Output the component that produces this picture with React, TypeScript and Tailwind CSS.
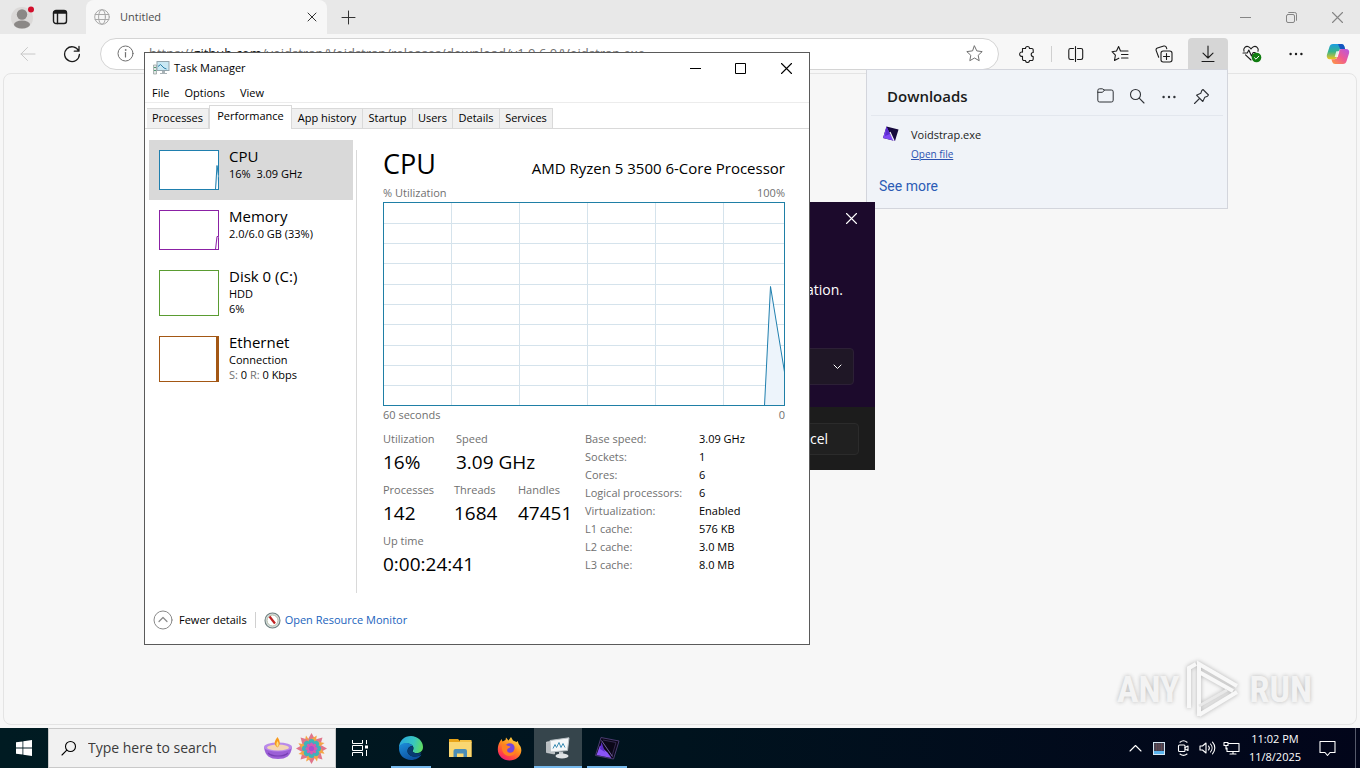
import React from "react";

type IconPropsT = {
  className?: string;
};

type ResourceT = {
  name: string;
  lines: React.ReactNode[];
  color: string;
  height: number;
  shape: React.ReactNode;
};

const strokeProps = {
  fill: "none",
  stroke: "currentColor",
  strokeLinecap: "round" as const,
  strokeLinejoin: "round" as const,
};

/* ---------- icons ---------- */

const ProfileIcon = () => (
  <svg width="26" height="26" viewBox="0 0 26 26">
    <circle cx="12" cy="14" r="11" fill="#dbd9d8" />
    <circle cx="12" cy="10.500" r="5.200" fill="#8b8886" />
    <ellipse cx="12" cy="20.500" rx="8" ry="4" fill="#8b8886" />
    <circle cx="21" cy="5.500" r="3" fill="#d20f2c" />
  </svg>
);

const WorkspaceIcon = () => (
  <svg width="16" height="16" viewBox="0 0 16 16" {...strokeProps} strokeWidth="1.4">
    <rect x="1.500" y="1.500" width="13" height="13" rx="2.500" />
    <path d="M1.500 4h13M2 2.700h12M5.500 4v10.500" />
  </svg>
);

const GlobeIcon = () => (
  <svg width="16" height="16" viewBox="0 0 16 16" {...strokeProps} strokeWidth="1">
    <circle cx="8" cy="8" r="7.300" />
    <ellipse cx="8" cy="8" rx="3.400" ry="7.300" />
    <path d="M1.200 5.500h13.600M1.200 10.500h13.600" />
  </svg>
);

const CloseIcon = ({ className }: IconPropsT) => (
  <svg className={className} width="11" height="11" viewBox="0 0 11 11" {...strokeProps} strokeWidth="1.1">
    <path d="M.500.500l10 10M10.500.500l-10 10" />
  </svg>
);

const TabCloseIcon = () => (
  <svg width="10" height="10" viewBox="0 0 10 10" {...strokeProps} strokeWidth="1">
    <path d="M1 1l8 8M9 1l-8 8" />
  </svg>
);

const MinimizeIcon = () => (
  <svg width="11" height="11" viewBox="0 0 11 11" fill="currentColor">
    <path d="M0 5h11v1H0z" />
  </svg>
);

const PlusIcon = () => (
  <svg width="15" height="15" viewBox="0 0 15 15" {...strokeProps} strokeWidth="1">
    <path d="M7.500 1v13M1 7.500h13" />
  </svg>
);

const RestoreIcon = () => (
  <svg width="11" height="11" viewBox="0 0 11 11" {...strokeProps} strokeWidth="1">
    <rect x="0.500" y="2.500" width="8" height="8" rx="1.500" />
    <path d="M2.700.500h6a1.800 1.800 0 0 1 1.800 1.800v6" />
  </svg>
);

const BackIcon = () => (
  <svg width="16" height="16" viewBox="0 0 16 16" {...strokeProps} strokeWidth="1">
    <path d="M15 8H1M7.500 1.500L1 8l6.500 6.500" />
  </svg>
);

const ReloadIcon = () => (
  <svg width="18" height="18" viewBox="0 0 18 18" {...strokeProps} strokeWidth="1.3">
    <path d="M15.700 6A7.400 7.400 0 1 0 16.400 9.500M16 1.500V6.200h-4.700" />
  </svg>
);

const InfoIcon = () => (
  <svg width="17" height="17" viewBox="0 0 17 17" {...strokeProps} strokeWidth="1">
    <circle cx="8.500" cy="8.500" r="7.500" />
    <path d="M8.500 7.500v4.500" strokeWidth="1.2" />
    <circle cx="8.500" cy="5" r=".4" />
  </svg>
);

const StarIcon = () => (
  <svg width="17" height="17" viewBox="0 0 17 17" {...strokeProps} strokeWidth="1">
    <path d="M8.500 1l2.300 4.900 5.400.7-4 3.700 1 5.400-4.700-2.700-4.700 2.700 1-5.400-4-3.700 5.400-.7z" />
  </svg>
);

const PuzzleIcon = () => (
  <svg width="16" height="18" viewBox="0 0 16 18" {...strokeProps} strokeWidth="1.1">
    <path d="M3.500 3.500h3a2 2 0 1 1 4 0h2.300a1.400 1.400 0 0 1 1.400 1.400v2.600a2 2 0 1 0 0 4v2.600a1.400 1.400 0 0 1-1.400 1.400h-2.300a2 2 0 0 1-4 0H4.900a1.400 1.400 0 0 1-1.400-1.400v-2.800a2.200 2.200 0 1 1 0-4.200z" />
  </svg>
);

const SplitIcon = () => (
  <svg width="16" height="16" viewBox="0 0 16 16" {...strokeProps} strokeWidth="1.1">
    <path d="M5.500 2.500H2.500A1.700 1.700 0 0 0 .800 4.200v7.600A1.700 1.700 0 0 0 2.500 13.500h3M9.500 2.500h3.500a1.700 1.700 0 0 1 1.700 1.700v7.600a1.700 1.700 0 0 1-1.700 1.700H9.500M7.500.600v14.800" />
  </svg>
);

const FavoritesIcon = () => (
  <svg width="18" height="17" viewBox="0 0 18 17" {...strokeProps} strokeWidth="1.1">
    <path d="M9.500 6L7.600 1.500 5.500 6 1 6.700l3.400 3.500-.9 5.300 4.300-2.300M9.500 6H17M10.500 9.500H17M10.500 13H17" />
  </svg>
);

const CollectionsIcon = () => (
  <svg width="18" height="18" viewBox="0 0 18 18" {...strokeProps} strokeWidth="1.1">
    <rect x="6" y="6" width="11" height="11" rx="2.200" />
    <path d="M11.500 8.500v6M8.500 11.500h6M3.700 12.300L1.200 5.600a2 2 0 0 1 1.200-2.500l6.400-2a2 2 0 0 1 2.500 1.200l.5 1.500" />
  </svg>
);

const DownloadIcon = () => (
  <svg width="14" height="18" viewBox="0 0 14 18" {...strokeProps} strokeWidth="1.1">
    <path d="M7 1v12M2 8.200L7 13l5-4.800M1 16.500h12" />
  </svg>
);

const HealthIcon = () => (
  <svg width="20" height="18" viewBox="0 0 20 18" {...strokeProps} strokeWidth="1.1">
    <path d="M2 6.200C.800 3 4 .700 6.500 1.700 7.700 2.200 8.500 3.200 9 4c.5-.8 1.300-1.800 2.500-2.300C14 .700 17.200 3 16 6.200M1 8h4.300l1.500-3 2.700 6 1.700-3.500h2M3.500 9.800L9 15" />
    <circle cx="14.500" cy="12.500" r="4.800" fill="#107c10" stroke="none" />
    <path d="M12.500 12.700l1.500 1.500 2.800-3" stroke="#fff" strokeWidth="1" />
  </svg>
);

const DotsIcon = () => (
  <svg width="14" height="4" viewBox="0 0 14 4" fill="currentColor">
    <circle cx="1.600" cy="2" r="1.200" />
    <circle cx="7" cy="2" r="1.200" />
    <circle cx="12.400" cy="2" r="1.200" />
  </svg>
);

const CopilotIcon = () => (
  <svg width="24" height="22" viewBox="0 0 24 22">
    <defs>
      <linearGradient id="cpA" x1="0" y1="0" x2="0" y2="1">
        <stop offset="0" stopColor="#1b9de2" />
        <stop offset="0.5" stopColor="#38b48a" />
        <stop offset="1" stopColor="#f5c51c" />
      </linearGradient>
      <linearGradient id="cpB" x1="1" y1="0" x2="0" y2="1">
        <stop offset="0" stopColor="#b457e6" />
        <stop offset="0.5" stopColor="#ef5a92" />
        <stop offset="1" stopColor="#ff9b3d" />
      </linearGradient>
    </defs>
    <path d="M7 1h8.500a3 3 0 0 1 2.700 2l.9 3h-3.600a3 3 0 0 0-2.900 2.200l-1.700 6A3 3 0 0 1 8 16.300H4.200C1.300 16.300.300 14 1 11.500L3.400 4C4 2 5 1 7 1z" fill="url(#cpA)" />
    <path d="M12 1h3.500a3 3 0 0 1 2.700 2l.9 3h-3.600l-1.200.3z" fill="#1555c0" />
    <path d="M17 21H9a3 3 0 0 1-2.700-2l-.9-2.700h3a3 3 0 0 0 2.900-2.200l1.700-6A3 3 0 0 1 16 6h3.800c2.900 0 3.900 2 3.200 4.500L20.600 18c-.6 2-1.600 3-3.600 3z" fill="url(#cpB)" />
    <path d="M10.300 8.300h3.200l-1.700 5.600H8.700z" fill="#fff" opacity="0.800" />
  </svg>
);

const FolderIcon = () => (
  <svg width="17" height="15" viewBox="0 0 17 15" {...strokeProps} strokeWidth="1">
    <path d="M.800 4.300h4.700L7.500 2h6.800a1.800 1.800 0 0 1 1.900 1.900v8.200a1.800 1.800 0 0 1-1.900 1.900H2.700a1.800 1.800 0 0 1-1.900-1.900V2.700A1.800 1.800 0 0 1 2.700.800h2.600L7.500 2" />
  </svg>
);

const SearchIcon = ({ className }: IconPropsT) => (
  <svg className={className} width="16" height="16" viewBox="0 0 16 16" {...strokeProps} strokeWidth="1.1">
    <circle cx="6.500" cy="6.500" r="5" />
    <path d="M10.200 10.200l4.800 4.800" />
  </svg>
);

const PinIcon = () => (
  <svg width="17" height="17" viewBox="0 0 17 17" {...strokeProps} strokeWidth="1.1">
    <path d="M10 1.500l5.500 5.500-1 1.200-2.700 1-2 4.300L3.500 7.200l4.300-2 1-2.700zM6.500 10.500L1.500 15.500" />
  </svg>
);

const VoidstrapIcon = () => (
  <svg width="17" height="16" viewBox="0 0 17 16">
    <path d="M4.500.500L16.500 3.500 13 15 1 12z" fill="#160a3c" />
    <path d="M4.500.500L1 12l12 3L8 8z" fill="#8048f5" />
    <path d="M4.500.500L3 10l5-2z" fill="#5b2bd0" />
    <path d="M8 6l4 8.700" stroke="#f0f0f8" strokeWidth="1.2" />
  </svg>
);

const VoidstrapTaskIcon = () => (
  <svg width="26" height="24" viewBox="0 0 26 24" fill="none">
    <path d="M7 1.500L25 5 19.500 23 1.500 19.500z" fill="#0b0718" stroke="#4a3b70" />
    <path d="M9 4l13 2.500-4 13.500" stroke="#33284f" />
    <path d="M6 9.500L2.500 19l15 3-4-5.500z" fill="#8a55f7" />
    <path d="M7.500 6L6 13l5 3z" fill="#5a2cc4" />
    <path d="M7.500 4.500l11 16" stroke="#9d86d8" strokeWidth="0.7" />
  </svg>
);

const TaskManagerIcon = () => (
  <svg width="17" height="16" viewBox="0 0 17 16">
    <path d="M.500 5h3v9h-3z" fill="#e3e6e6" stroke="#8d9a96" strokeWidth="0.7" />
    <path d="M1 7h2v1H1zM1 10h2v1H1z" fill="#4e9a72" />
    <rect x="4" y="1.500" width="12" height="9" fill="#c8e8f4" stroke="#93a5ad" />
    <path d="M5 6.500l2.500-2L11 8l2.500 1" fill="none" stroke="#2b7fa8" />
    <path d="M9 11h3v2H9zM7 13h7v1H7z" fill="#aab3b7" />
  </svg>
);

const TaskManagerTaskIcon = () => (
  <svg width="26" height="24" viewBox="0 0 26 24">
    <path d="M1.500 6l8-1v13l-8-1.500z" fill="#b9bec1" stroke="#e4e6e7" strokeWidth="0.600" />
    <path d="M5 4.500L24 1.800 22.500 14.500 5.500 16z" fill="#f5f7f8" stroke="#b9c1c5" />
    <path d="M8 12.500l2-4 1.500 3L14 6.500l2 5 2-4 2 4" fill="none" stroke="#3f8fb5" />
    <path d="M14 16l4-.3.5 3h-4.500z" fill="#c6ccd0" />
    <ellipse cx="17" cy="20" rx="6.500" ry="2.500" fill="#dfe3e5" />
  </svg>
);

const ResourceMonitorIcon = () => (
  <svg width="17" height="17" viewBox="0 0 17 17">
    <circle cx="8.500" cy="8.500" r="7.500" fill="#d8e3e3" stroke="#6f7f7f" strokeWidth="1.100" />
    <circle cx="8.500" cy="8.500" r="5.500" fill="#fff" stroke="#a9b09a" strokeWidth="0.900" />
    <path d="M5.500 4.500l5.500 7" stroke="#c02020" strokeWidth="2.200" />
  </svg>
);

const ChevronUpCircle = () => (
  <svg width="20" height="20" viewBox="0 0 20 20" {...strokeProps} strokeWidth="1">
    <circle cx="10" cy="10" r="9" />
    <path d="M6 11.500l4-4 4 4" strokeWidth="1.200" />
  </svg>
);

const WindowsIcon = () => (
  <svg width="16" height="16" viewBox="0 0 16 16" fill="#fff">
    <path d="M0 2.300L6.500 1.400v6.200H0zM7.300 1.300L16 0v7.600H7.300zM0 8.400h6.500v6.200L0 13.700zM7.300 8.400H16V16l-8.700-1.300z" />
  </svg>
);

const DiyaIcon = () => (
  <svg width="28" height="24" viewBox="0 0 28 24">
    <path d="M0 11c1 9 6 12 14 12s13-3 14-12z" fill="#9b5fd6" />
    <ellipse cx="14" cy="11" rx="14" ry="4.500" fill="#b98aea" />
    <ellipse cx="14" cy="11.500" rx="11" ry="3" fill="#f3d6b4" />
    <path d="M13.500 1c-3 4-4.500 7 0 10.500C17 8 16 5 13.500 1z" fill="#f79a1c" />
    <path d="M13.600 5c-1.300 2-2 4 0 6 1.600-2 1.200-4 0-6z" fill="#ffe07a" />
    <path d="M4 17c4 4 16 4 20 0" fill="none" stroke="#7840b5" strokeWidth="1.200" />
  </svg>
);

const petals = [0, 45, 90, 135, 180, 225, 270, 315];

const RangoliIcon = () => (
  <svg width="31" height="31" viewBox="-15.500 -15.500 31 31">
    {petals.map((angle) => (
      <g key={angle} transform={`rotate(${angle})`}>
        <path d="M0-15.500l4.500 8H-4.500z" fill="#e0758a" />
        <path d="M-5.500-13l3.500 5-5 2z" fill="#f4a545" />
      </g>
    ))}
    <circle r="9" fill="#f0a04a" />
    {petals.map((angle) => (
      <circle key={angle} transform={`rotate(${angle})`} cy="-6.500" r="3" fill="#3fb3b8" />
    ))}
    <circle r="6" fill="#4b9fce" />
    {petals.map((angle) => (
      <ellipse key={angle} transform={`rotate(${angle})`} cy="-3.500" rx="1.600" ry="2.600" fill="#d85ab0" />
    ))}
    <circle r="2.600" fill="#a64fd0" />
  </svg>
);

const TaskViewIcon = () => (
  <svg width="17" height="16" viewBox="0 0 17 16" fill="none" stroke="#fff">
    <path d="M.500 0v3.500h10V0M.500 16v-3.500h10V16M.500 5.500h10v5H.500zM14.500 0v4M14.500 10v6" />
    <path d="M13 5.500h3v3h-3z" fill="#fff" stroke="none" />
  </svg>
);

const EdgeIcon = () => (
  <svg width="26" height="26" viewBox="0 0 26 26">
    <defs>
      <linearGradient id="edgeTop" x1="0" y1="0.300" x2="1" y2="0.500">
        <stop offset="0" stopColor="#28a7df" />
        <stop offset="0.600" stopColor="#38c6c0" />
        <stop offset="1" stopColor="#5fdc62" />
      </linearGradient>
      <linearGradient id="edgeLow" x1="0" y1="0" x2="0.600" y2="1">
        <stop offset="0" stopColor="#1d8fdb" />
        <stop offset="1" stopColor="#0c4f9e" />
      </linearGradient>
    </defs>
    <path d="M1 13C1 5.500 6.500 1 13 1s12 5 12 11c0 4-3 6-6.500 6-2 0-4-.8-4-1.800 0-.7 1-1.200 1-3 0-2.500-2.500-4.700-6.500-4.700S2 10 1 13z" fill="url(#edgeTop)" />
    <path d="M1 13.500C1 10 4.500 8 8.500 8c3 0 5.500 1.500 6.500 3.500-2.500-1-5.500 1-5.500 4.500 0 3.500 3.500 5.500 7.500 5.500 3 0 5-1 6.500-2-1.800 3.300-6 5.500-10.300 5.500C6 25 1 20 1 13.500z" fill="url(#edgeLow)" />
    <path d="M9.500 16c0-2.500 2-4.500 4-4.500.8 0 1.400.3 1.800.7 0 2-.9 2.800-.9 3.700 0 1.200 2 2.300 4.500 2.300 1.700 0 3.400-.4 4.600-1.300-.3 1.200-1 2.500-1.800 3.500-1.500.7-3 1.100-4.700 1.100-4 0-7.500-2-7.500-5.500z" fill="#083b72" />
  </svg>
);

const ExplorerIcon = () => (
  <svg width="23" height="20" viewBox="0 0 23 20">
    <path d="M0 1h9l2 2h11.500v16H0z" fill="#e8a317" />
    <path d="M11 2h11.500v3H11z" fill="#f4c145" />
    <path d="M0 4h22.500v15H0z" fill="#fad772" />
    <path d="M4.500 19v-6a2 2 0 0 1 2-2h9.500a2 2 0 0 1 2 2v6h-3.500v-3.500h-6.500V19z" fill="#4a8db8" />
  </svg>
);

const FirefoxIcon = () => (
  <svg width="25" height="25" viewBox="0 0 25 25">
    <defs>
      <linearGradient id="ffFlame" x1="0.800" y1="0" x2="0.200" y2="1">
        <stop offset="0" stopColor="#ffe14a" />
        <stop offset="0.450" stopColor="#ff8b1c" />
        <stop offset="0.800" stopColor="#ff3a4c" />
        <stop offset="1" stopColor="#e31a86" />
      </linearGradient>
    </defs>
    <path d="M3 5.500L4.500 3l1 2.500L8.500 4l.5-2.500 2.500 3L14 1l2 3.500L19.500 6l1.200-1 1 3C23.500 10 24.500 12 24.300 15c-.5 5.500-5.500 9.500-11.800 9.500S.800 20 .800 13.500C.800 10.500 1.500 7.500 3 5.500z" fill="url(#ffFlame)" />
    <circle cx="12.800" cy="12" r="4.800" fill="#7546dd" />
    <path d="M5 9c2-1 4-.5 5.500.8 1.500.4 2.500.4 3 .7-.5 1.700-2.500 1.500-3.300 3-.5 2 1 3.500 3 3.500 3 0 5-1.500 6-5 .5 5-2.500 8-7 8-5 0-8-4.500-7.200-11z" fill="#ff8022" />
  </svg>
);

const trayProps = { ...strokeProps, stroke: "#fff", strokeWidth: 1.1 };

const TrayChevron = () => (
  <svg width="13" height="8" viewBox="0 0 13 8" {...trayProps}>
    <path d="M1 7l5.500-5.500L12 7" />
  </svg>
);

const TrayAppIcon = () => (
  <svg width="12" height="13" viewBox="0 0 12 13">
    <path d="M0 0h12v13H0z" fill="#d6e6f2" />
    <path d="M1 1h10v8H1z" fill="#3a3f52" />
    <path d="M1 3h10M1 5h10M1 7h10M3.500 1v8M6 1v8M8.500 1v8" stroke="#8e5550" strokeWidth="0.400" />
    <path d="M1 9h10v3H1z" fill="#5bb5ee" />
  </svg>
);

const TrayCamera = () => (
  <svg width="13" height="16" viewBox="0 0 13 16" {...trayProps}>
    <rect x="1.500" y="5" width="6.500" height="6.500" rx="1" />
    <path d="M8 7.500l3-1.500v4.500L8 9M3 2.200C5 .600 8 .600 10 2.200M3 14c2 1.500 5 1.500 7 0" />
  </svg>
);

const TrayVolume = () => (
  <svg width="17" height="14" viewBox="0 0 17 14" {...trayProps}>
    <path d="M1 5v4h2.500L7 12V2L3.500 5zM9.500 5a3 3 0 0 1 0 4M11.500 3a6 6 0 0 1 0 8M13.500 1.200a8.500 8.500 0 0 1 0 11.600" />
  </svg>
);

const TrayNetwork = () => (
  <svg width="17" height="14" viewBox="0 0 17 14" {...trayProps}>
    <path d="M6 2.500h10v8H4V7M10 10.500V13M7 13h6M1 1.500h4v3H1zM3 4.500V8" />
  </svg>
);

const TrayNotification = () => (
  <svg width="17" height="17" viewBox="0 0 17 17" {...trayProps}>
    <path d="M1 1.500h15v11h-5l-2.500 3-2.500-3H1z" />
  </svg>
);

/* ---------- browser ---------- */

const toolbarButton = "flex h-[30px] w-11 items-center justify-center";

const TabStrip = () => (
  <div className="flex h-[34px] bg-[#e8e8e8] text-[#1b1b1b]">
    <div className="flex w-[86px] items-center rounded-br-lg pl-[10px]">
      <button type="button" aria-label="Profile">
        <ProfileIcon />
      </button>
      <button type="button" aria-label="Tab actions" className="ml-4">
        <WorkspaceIcon />
      </button>
    </div>
    <div className="flex w-[241px] items-center rounded-t-lg bg-[#f7f7f7] pr-[10px] pl-2">
      <span className="text-[#a9a9a9]">
        <GlobeIcon />
      </span>
      <span className="ml-[10px] flex-1 text-[11px] text-[#4d4d4d]">Untitled</span>
      <button type="button" aria-label="Close tab" className="text-[#333]">
        <TabCloseIcon />
      </button>
    </div>
    <button type="button" aria-label="New tab" className="ml-[14px] text-[#333]">
      <PlusIcon />
    </button>
    <div className="ml-auto flex text-[#858585]">
      <button type="button" aria-label="Minimize" className="flex w-[46px] items-center justify-center">
        <MinimizeIcon />
      </button>
      <button type="button" aria-label="Restore" className="flex w-[46px] items-center justify-center">
        <RestoreIcon />
      </button>
      <button type="button" aria-label="Close" className="flex w-[46px] items-center justify-center">
        <CloseIcon />
      </button>
    </div>
  </div>
);

const Toolbar = () => (
  <div className="flex h-[39px] items-center pr-[2px] text-[#1b1b1b]">
    <button type="button" aria-label="Back" className="ml-5 text-[#c8c8c8]">
      <BackIcon />
    </button>
    <button type="button" aria-label="Refresh" className="ml-[27px]">
      <ReloadIcon />
    </button>
    <div className="mr-[6px] ml-[19px] flex h-8 flex-1 items-center rounded-full border border-[#d4d4d4] bg-white pr-[15px] pl-4">
      <span className="text-[#707070]">
        <InfoIcon />
      </span>
      <span className="ml-[15px] flex-1 text-[13px] whitespace-nowrap text-[#707070]">
        https://<span className="text-[#1b1b1b]">github.com</span>
        /voidstrap/Voidstrap/releases/download/v1.0.6.0/Voidstrap.exe
      </span>
      <button type="button" aria-label="Add to favorites" className="text-[#707070]">
        <StarIcon />
      </button>
    </div>
    <button type="button" aria-label="Extensions" className={toolbarButton}>
      <PuzzleIcon />
    </button>
    <span className="mx-[2px] h-4 w-px bg-[#d0d0d0]" />
    <button type="button" aria-label="Split screen" className={toolbarButton}>
      <SplitIcon />
    </button>
    <button type="button" aria-label="Favorites" className={toolbarButton}>
      <FavoritesIcon />
    </button>
    <button type="button" aria-label="Collections" className={toolbarButton}>
      <CollectionsIcon />
    </button>
    <button
      type="button"
      aria-label="Downloads"
      className="mx-[2px] flex h-[31px] w-10 items-center justify-center rounded-t bg-[#d6d6d6]"
    >
      <DownloadIcon />
    </button>
    <button type="button" aria-label="Browser essentials" className={toolbarButton}>
      <HealthIcon />
    </button>
    <button type="button" aria-label="Settings and more" className={toolbarButton}>
      <DotsIcon />
    </button>
    <button type="button" aria-label="Copilot" className="flex w-10 items-center justify-center">
      <CopilotIcon />
    </button>
  </div>
);

const DownloadsPanel = () => (
  <section className="absolute top-[69px] right-[132px] w-[362px] border border-[#d3d5dc] bg-[#f0f3f8] px-1 pb-3 text-[#1b1b1b]">
    <div className="flex h-[46px] items-center border-b border-[#e3e7ee] pt-2 pr-[6px] pl-4">
      <h2 className="flex-1 text-[15px] font-semibold">Downloads</h2>
      <div className="flex text-[#2f3237]">
        <button type="button" aria-label="Open downloads folder" className="flex w-8 justify-center">
          <FolderIcon />
        </button>
        <button type="button" aria-label="Search downloads" className="flex w-8 justify-center">
          <SearchIcon />
        </button>
        <button type="button" aria-label="More options" className="flex w-8 items-center justify-center">
          <DotsIcon />
        </button>
        <button type="button" aria-label="Pin downloads" className="flex w-8 justify-center">
          <PinIcon />
        </button>
      </div>
    </div>
    <div className="flex pt-[10px] pl-[11px]">
      <VoidstrapIcon />
      <div className="ml-3">
        <p className="text-[11px] leading-[18px]">Voidstrap.exe</p>
        <a href="#open" className="block text-[10px] leading-5 text-[#2c52b0] underline">
          Open file
        </a>
      </div>
    </div>
    <a
      href="#all"
      className="mt-3 ml-2 block font-[Roboto,sans-serif] text-sm leading-5 text-[#2c5bb5]"
    >
      See more
    </a>
  </section>
);

/* ---------- installer dialog ---------- */

const InstallerDialog = () => (
  <section className="absolute top-[202px] left-[455px] w-[420px] bg-[#1c0a2c] text-sm text-white">
    <div className="flex h-8 justify-end">
      <button type="button" aria-label="Close installer" className="flex w-12 items-center justify-center">
        <CloseIcon />
      </button>
    </div>
    <p className="mt-[46px] mr-8 text-right leading-5">installation.</p>
    <div className="mx-[21px] mt-12 flex h-[37px] items-center justify-end rounded border border-[#2c2036] bg-[#1f1726] pr-[11px]">
      <svg width="9" height="6" viewBox="0 0 9 6" {...strokeProps}>
        <path d="M1 1l3.500 3.500L8 1" />
      </svg>
    </div>
    <div className="mt-[22px] flex h-[63px] items-center justify-end bg-[#1c1c1c] pr-4">
      <button type="button" className="h-8 w-[105px] rounded border border-[#2b2b2b] bg-[#202020]">
        Cancel
      </button>
    </div>
  </section>
);

/* ---------- task manager ---------- */

const tabs = [
  { label: "Processes", width: "w-[62px]" },
  { label: "Performance", width: "w-[83px]" },
  { label: "App history", width: "w-[71px]" },
  { label: "Startup", width: "w-[50px]" },
  { label: "Users", width: "w-[40px]" },
  { label: "Details", width: "w-[47px]" },
  { label: "Services", width: "w-[53px]" },
];

const resources: ResourceT[] = [
  {
    name: "CPU",
    lines: ["16%  3.09 GHz"],
    color: "#1f7fae",
    height: 40,
    shape: <path d="M56.500 39.500l1.500-24 1.500 10" fill="#d9eaf4" stroke="#1f7fae" />,
  },
  {
    name: "Memory",
    lines: ["2.0/6.0 GB (33%)"],
    color: "#8b21a5",
    height: 40,
    shape: <path d="M56.500 39.500l1.500-13h1.500" fill="#f4e6f8" stroke="#8b21a5" />,
  },
  { name: "Disk 0 (C:)", lines: ["HDD", "6%"], color: "#5a9c32", height: 46, shape: null },
  {
    name: "Ethernet",
    lines: [
      "Connection",
      <>
        <span className="text-[#707070]">S:</span> 0 <span className="text-[#707070]">R:</span> 0 Kbps
      </>,
    ],
    color: "#a35714",
    height: 46,
    shape: <path d="M57 1h3v44h-3z" fill="#a35714" />,
  },
];

const stats = [
  [
    { label: "Utilization", value: "16%", width: "w-[73px]" },
    { label: "Speed", value: "3.09 GHz", width: "w-[120px]" },
  ],
  [
    { label: "Processes", value: "142", width: "w-[71px]" },
    { label: "Threads", value: "1684", width: "w-16" },
    { label: "Handles", value: "47451", width: "w-16" },
  ],
  [{ label: "Up time", value: "0:00:24:41", width: "w-[120px]" }],
];

const specs = [
  ["Base speed:", "3.09 GHz"],
  ["Sockets:", "1"],
  ["Cores:", "6"],
  ["Logical processors:", "6"],
  ["Virtualization:", "Enabled"],
  ["L1 cache:", "576 KB"],
  ["L2 cache:", "3.0 MB"],
  ["L3 cache:", "8.0 MB"],
];

const UtilizationChart = () => (
  <svg className="block" width="402" height="204" viewBox="0 0 402 204" fill="none">
    {[68, 136, 204, 272, 340].map((x) => (
      <path key={x} d={`M${x}.5 0v204`} stroke="#d5e3ec" />
    ))}
    {[21, 41, 61, 82, 102, 122, 143, 163, 183].map((y) => (
      <path key={y} d={`M0 ${y}.5h402`} stroke="#d5e3ec" />
    ))}
    <path d="M381.500 203.500L387.500 84.500 401.500 170V203.500z" fill="#edf4fb" />
    <path d="M381.500 203.500L387.500 84.500 401.500 170" stroke="#1f7fae" />
    <rect x="0.500" y="0.500" width="401" height="203" stroke="#1f7fa6" />
  </svg>
);

const ResourceList = () => (
  <div className="w-[208px] border-r border-[#d9d9d9] pr-[3px]">
    {resources.map((item, index) => (
      <button
        type="button"
        key={item.name}
        className={
          index === 0
            ? "-mt-[10px] flex w-full bg-[#d9d9d9] px-[10px] py-[10px] text-left"
            : "flex w-full px-[10px] py-[10px] text-left"
        }
      >
        <svg width="60" height={item.height} viewBox={`0 0 60 ${item.height}`} className="shrink-0">
          <rect x="0.500" y="0.500" width="59" height={item.height - 1} fill="#fff" stroke={item.color} />
          {item.shape}
        </svg>
        <div className="-mt-1 ml-[10px] h-0">
          <p className="text-[15px] leading-5">{item.name}</p>
          {item.lines.map((line, i) => (
            <p key={i} className="text-[11px] leading-[15px] whitespace-pre">
              {line}
            </p>
          ))}
        </div>
      </button>
    ))}
  </div>
);

const PerformancePane = () => (
  <div className="ml-[26px] w-[402px] text-[#707070]">
    <div className="flex items-baseline justify-between text-black">
      <h1 className="text-[27px] leading-7">CPU</h1>
      <span className="text-[15px]">AMD Ryzen 5 3500 6-Core Processor</span>
    </div>
    <div className="mt-1 flex justify-between text-[11px] leading-[18px]">
      <span>% Utilization</span>
      <span>100%</span>
    </div>
    <UtilizationChart />
    <div className="flex justify-between text-[11px] leading-[18px]">
      <span>60 seconds</span>
      <span>0</span>
    </div>
    <div className="mt-[6px] flex items-start">
      <div className="w-[202px]">
        {stats.map((row, i) => (
          <div key={i} className="flex h-[51px]">
            {row.map((stat) => (
              <div key={stat.label} className={`${stat.width} shrink-0`}>
                <p className="text-[11px] leading-[18px]">{stat.label}</p>
                <p className="text-[19px] leading-7 whitespace-nowrap text-black">{stat.value}</p>
              </div>
            ))}
          </div>
        ))}
      </div>
      <table className="text-[11px]">
        <tbody>
          {specs.map(([label, value]) => (
            <tr key={label} className="h-[18px] leading-[18px]">
              <th scope="row" className="w-[114px] p-0 text-left font-normal">
                {label}
              </th>
              <td className="p-0 text-black">{value}</td>
            </tr>
          ))}
        </tbody>
      </table>
    </div>
  </div>
);

const TaskManager = () => (
  <section className="absolute top-[52px] left-36 w-[666px] border border-[#5a5a5a] bg-white text-[11px] text-black">
    <div className="flex h-[30px] items-center pl-2">
      <TaskManagerIcon />
      <span className="ml-1 flex-1">Task Manager</span>
      <button type="button" aria-label="Minimize Task Manager" className="flex w-[46px] justify-center">
        <MinimizeIcon />
      </button>
      <button type="button" aria-label="Maximize Task Manager" className="flex w-[45px] justify-center">
        <svg width="11" height="11" viewBox="0 0 11 11" fill="none" stroke="#000">
          <path d="M.500.500h10v10H.500z" />
        </svg>
      </button>
      <button type="button" aria-label="Close Task Manager" className="flex w-[46px] justify-center">
        <CloseIcon />
      </button>
    </div>
    <div className="flex h-5 items-center gap-[15px] border-b border-[#ececec] pt-[2px] pl-[7px]">
      <button type="button">File</button>
      <button type="button">Options</button>
      <button type="button">View</button>
    </div>
    <div role="tablist" className="flex h-[26px] items-end border-b border-[#d9d9d9] pl-[2px]">
      {tabs.map((tab) => {
        const selected = tab.label === "Performance";
        return (
          <button
            type="button"
            role="tab"
            key={tab.label}
            aria-selected={selected}
            className={`${tab.width} ${
              selected
                ? "-mb-px h-6 border-x border-t border-[#d9d9d9] bg-white pb-[3px]"
                : "h-5 border-t border-r border-[#d9d9d9] bg-[#f0f0f0]"
            } flex items-center justify-center whitespace-nowrap`}
          >
            {tab.label}
          </button>
        );
      })}
    </div>
    <div className="flex pt-[21px] pl-1">
      <div className="flex h-[443px]">
        <ResourceList />
      </div>
      <PerformancePane />
    </div>
    <div className="flex items-center pt-[17px] pb-[14px] pl-2">
      <button type="button" className="flex items-center gap-[6px]">
        <span className="text-[#8a8a8a]">
          <ChevronUpCircle />
        </span>
        Fewer details
      </button>
      <span className="mx-2 h-4 w-px bg-[#d0d0d0]" />
      <ResourceMonitorIcon />
      <a href="#monitor" className="ml-1 text-[#1a63bd]">
        Open Resource Monitor
      </a>
    </div>
  </section>
);

const Watermark = () => (
  <div className="absolute right-12 bottom-[46px] flex items-center gap-[6px] font-['Liberation_Sans_Narrow','Roboto_Condensed',sans-serif] text-[36px] leading-none font-bold text-[#f3f3f3] [text-shadow:0_0_4px_#b8b8b8]">
    <span>ANY</span>
    <svg width="58" height="64" viewBox="0 0 58 64" fill="none" className="drop-shadow-[0_0_2px_#b0b0b0]">
      <path d="M4 50V10l7-4M14 58V6l38 22M14 14v0l34 19M52 34L14 57" stroke="#f8f8f8" strokeWidth="4" />
      <path d="M14 48l28-16" stroke="#e9e9e9" strokeWidth="3" />
    </svg>
    <span>RUN</span>
  </div>
);

/* ---------- taskbar ---------- */

const taskApps = [
  { label: "Microsoft Edge", icon: <EdgeIcon />, state: "open" },
  { label: "File Explorer", icon: <ExplorerIcon />, state: "idle" },
  { label: "Firefox", icon: <FirefoxIcon />, state: "idle" },
  { label: "Task Manager taskbar button", icon: <TaskManagerTaskIcon />, state: "active" },
  { label: "Voidstrap", icon: <VoidstrapTaskIcon />, state: "open" },
];

const trayItems = [
  { label: "Show hidden icons", icon: <TrayChevron /> },
  { label: "Tray app", icon: <TrayAppIcon /> },
  { label: "Meet now", icon: <TrayCamera /> },
  { label: "Volume", icon: <TrayVolume /> },
  { label: "Network", icon: <TrayNetwork /> },
];

const Taskbar = () => (
  <footer className="relative flex h-10 bg-linear-to-r from-[#001b22] via-[#00131e] to-[#02051a]">
    <button type="button" aria-label="Start" className="flex w-12 items-center justify-center">
      <WindowsIcon />
    </button>
    <label className="flex w-72 items-center border border-[#c9c9c9] bg-[#f1f1f1] pr-2 pl-3">
      <SearchIcon className="-scale-x-100 text-black" />
      <input
        type="text"
        aria-label="Search"
        placeholder="Type here to search"
        className="ml-[11px] w-0 flex-1 bg-transparent text-sm outline-none placeholder:text-[#3c3c3c]"
      />
      <DiyaIcon />
      <span className="ml-1">
        <RangoliIcon />
      </span>
    </label>
    <button type="button" aria-label="Task View" className="mr-[3px] flex w-12 items-center justify-center">
      <TaskViewIcon />
    </button>
    <div className="flex gap-px">
      {taskApps.map((app) => (
        <button
          type="button"
          key={app.label}
          aria-label={app.label}
          className={`relative flex w-12 items-center justify-center ${app.state === "active" ? "bg-[#36454c]" : ""}`}
        >
          {app.icon}
          {app.state !== "idle" && (
            <span
              className={`absolute bottom-0 h-[2px] bg-[#76b9ed] ${app.state === "active" ? "inset-x-0" : "inset-x-1"}`}
            />
          )}
        </button>
      ))}
    </div>
    <div className="ml-auto flex items-center text-white">
      {trayItems.map((item) => (
        <button type="button" key={item.label} aria-label={item.label} className="flex w-6 justify-center">
          {item.icon}
        </button>
      ))}
      <button type="button" className="w-16 text-center text-[11px] leading-[18px] whitespace-nowrap">
        11:02 PM
        <br />
        11/8/2025
      </button>
      <button type="button" aria-label="Notifications" className="flex w-10 justify-center">
        <TrayNotification />
      </button>
      <span className="mr-1 ml-2 h-10 w-px bg-[#565a6b]" />
    </div>
  </footer>
);

const App = () => {
  return (
    <div className="relative flex h-screen w-full flex-col overflow-hidden bg-[#f7f7f7] font-['Open_Sans','Noto_Sans',sans-serif]">
      <TabStrip />
      <Toolbar />
      <main className="mx-[3px] mb-[3px] flex-1 rounded-lg border border-[#e4e4e4] bg-[#f7f7f7]" />
      <Watermark />
      <DownloadsPanel />
      <InstallerDialog />
      <TaskManager />
      <Taskbar />
    </div>
  );
};

export default App;
